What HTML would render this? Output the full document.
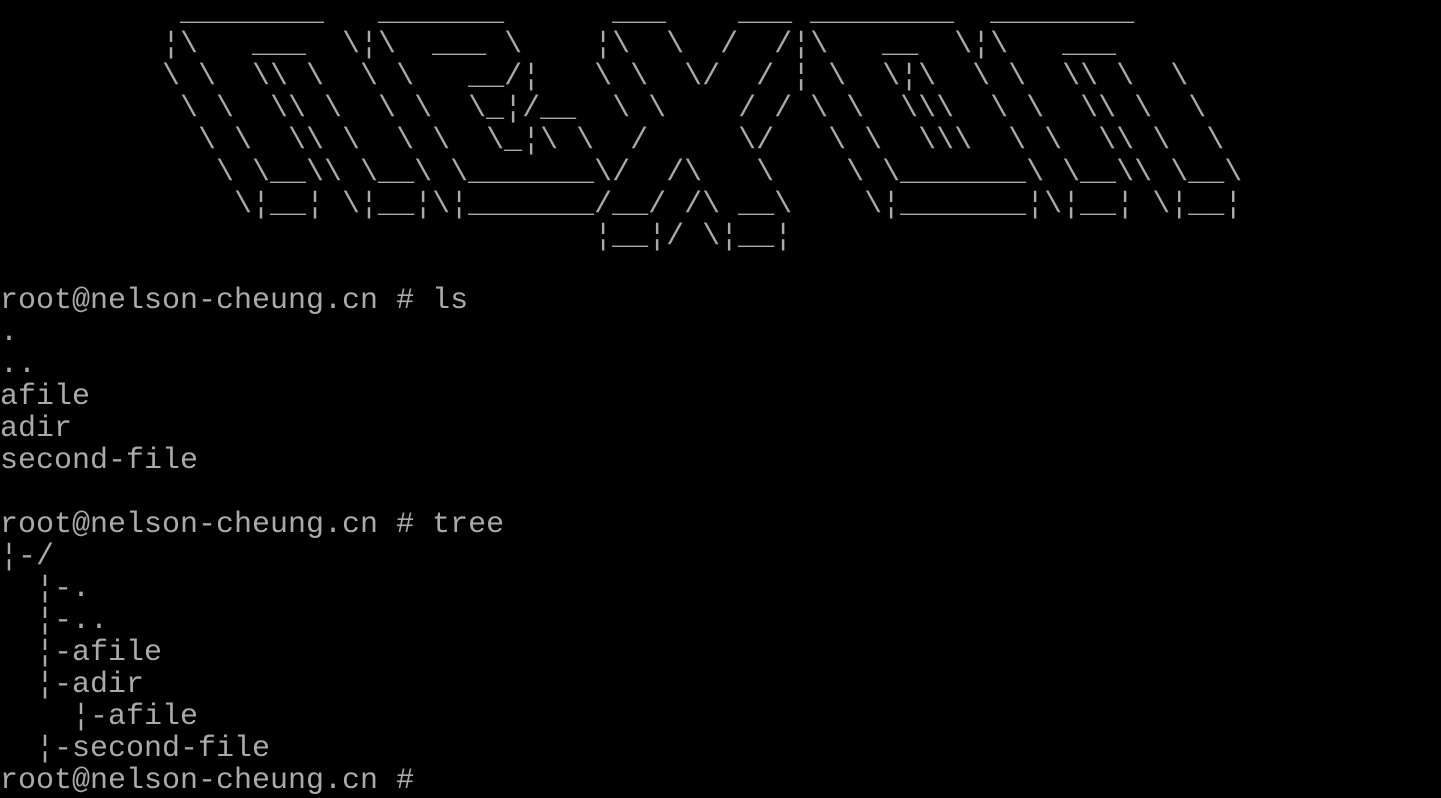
<!DOCTYPE html>
<html><head><meta charset="utf-8"><style>
html,body{margin:0;padding:0;background:#000;width:1441px;height:796px;overflow:hidden}
pre{position:absolute;left:0;top:-3px;margin:0;font-family:"Liberation Mono",monospace;font-size:30px;line-height:32px;color:#aaa;white-space:pre}
</style></head><body>
<pre>          ________   _______      ___    ___ ________  ________
         ¦\   ___  \¦\  ___ \    ¦\  \  /  /¦\   __  \¦\   ___
         \ \  \\ \  \ \   __/¦   \ \  \/  / ¦ \  \¦\  \ \  \\ \  \
          \ \  \\ \  \ \  \_¦/__  \ \    / / \ \  \\\  \ \  \\ \  \
           \ \  \\ \  \ \  \_¦\ \  /     \/   \ \  \\\  \ \  \\ \  \
            \ \__\\ \__\ \_______\/  /\   \    \ \_______\ \__\\ \__\
             \¦__¦ \¦__¦\¦_______/__/ /\ __\    \¦_______¦\¦__¦ \¦__¦
                                 ¦__¦/ \¦__¦

root@nelson-cheung.cn # ls
.
..
afile
adir
second-file

root@nelson-cheung.cn # tree
¦-/
  ¦-.
  ¦-..
  ¦-afile
  ¦-adir
    ¦-afile
  ¦-second-file
root@nelson-cheung.cn #</pre>
</body></html>
